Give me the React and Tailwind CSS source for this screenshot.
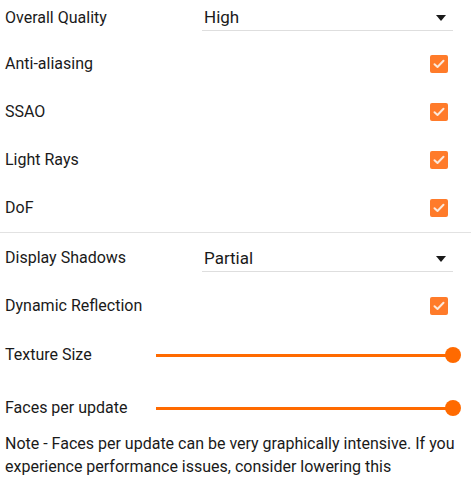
const checks = ["Anti-aliasing", "SSAO", "Light Rays", "DoF"];

function Check() {
    return (
        <span className="flex h-[18px] w-[18px] items-center justify-center rounded-[2px] bg-[#ff7b2a]">
            <svg width="12" height="10" viewBox="0 0 12 10" fill="none">
                <path d="M1.5 5.2 L4.5 8 L10.5 1.8" stroke="#fbe9dc" strokeWidth="2" strokeLinecap="round" strokeLinejoin="round" />
            </svg>
        </span>
    );
}

function Select({ value }) {
    return (
        <div className="ml-auto mr-[13px] flex h-[25px] w-[251px] items-center justify-between border-b border-[#dedede] pl-[2px] pr-[7px]">
            <span className="text-[17px] text-[#1a1a1a]">{value}</span>
            <span className="h-0 w-0 border-x-[5px] border-t-[6px] border-x-transparent border-t-[#1a1a1a]" />
        </div>
    );
}

function Slider() {
    return (
        <div className="ml-auto flex w-[305px] items-center">
            <div className="h-[3px] flex-1 bg-[#ff6a00]" />
            <div className="-ml-[8px] h-[16px] w-[16px] rounded-full bg-[#ff6a00]" />
        </div>
    );
}

export default function App() {
    return (
        <div className="w-[471px] bg-white text-[16px] text-[#1a1a1a]" style={{ fontFamily: "Roboto, sans-serif" }}>
            <div className="flex h-[40px] items-start px-[5px] pt-[6px]">
                <span className="leading-[24px]">Overall Quality</span>
                <Select value="High" />
            </div>

            {checks.map((c) => (
                <div key={c} className="flex h-[48px] items-center px-[5px]">
                    <span>{c}</span>
                    <span className="ml-auto mr-[18px]"><Check /></span>
                </div>
            ))}

            <div className="h-px bg-[#e2e2e2]" />

            <div className="flex h-[49px] items-center px-[5px] pt-[3px]">
                <span className="-mt-[3px]">Display Shadows</span>
                <Select value="Partial" />
            </div>

            <div className="flex h-[48px] items-center px-[5px]">
                <span>Dynamic Reflection</span>
                <span className="ml-auto mr-[18px]"><Check /></span>
            </div>

            <div className="flex h-[50px] items-center pl-[5px] pr-[10px]">
                <span>Texture Size</span>
                <Slider />
            </div>

            <div className="flex h-[52px] items-center pl-[5px] pr-[10px] pt-[4px]">
                <span>Faces per update</span>
                <Slider />
            </div>

            <p className="px-[5px] text-[16px] leading-[23px]">
                Note - Faces per update can be very graphically intensive. If you experience performance issues, consider lowering this
            </p>
        </div>
    );
}
